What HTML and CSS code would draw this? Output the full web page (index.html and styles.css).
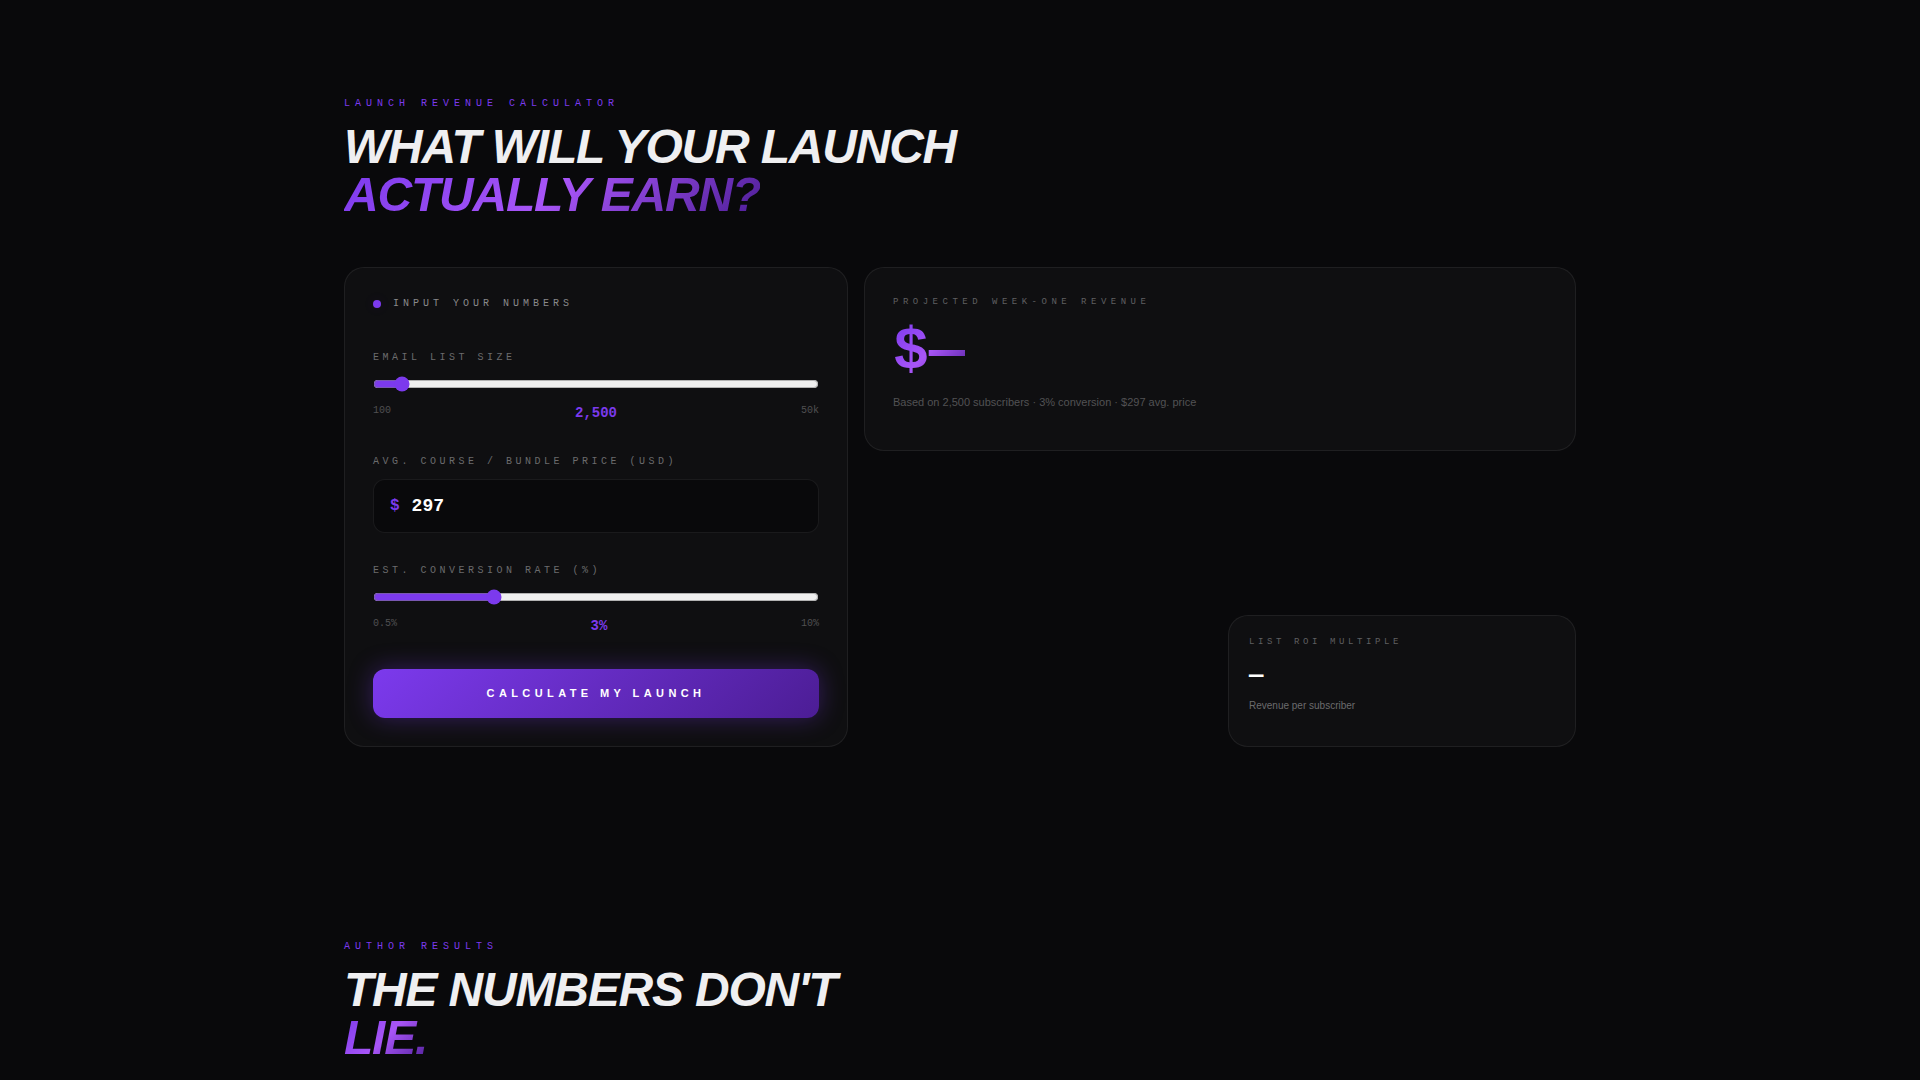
FILE: index.html
```
<!DOCTYPE html>
<html lang="en">
  <head>
    <meta charset="UTF-8" />
    <meta name="viewport" content="width=device-width, initial-scale=1.0" />
    <title>Launch Revenue Calculator</title>
    <link rel="stylesheet" href="styles.css">
  </head>
  <body>
    <section class="section">
      <p class="eyebrow">LAUNCH REVENUE CALCULATOR</p>
      <h2 class="heading">
        WHAT WILL YOUR LAUNCH<br />
        <span class="gradient-text">ACTUALLY EARN?</span>
      </h2>

      <div class="calculator">
        <form class="card inputs" id="launchForm">
          <div class="inputs-title"><span class="dot"></span>INPUT YOUR NUMBERS</div>

          <div class="field">
            <label for="listSize">EMAIL LIST SIZE</label>
            <input type="range" id="listSize" min="100" max="50000" step="100" value="2500" />
            <div class="scale">
              <span>100</span>
              <output id="listSizeValue" for="listSize">2,500</output>
              <span>50k</span>
            </div>
          </div>

          <div class="field">
            <label for="price">AVG. COURSE / BUNDLE PRICE (USD)</label>
            <div class="price-box">
              <span class="currency">$</span>
              <input type="number" id="price" value="297" min="1" />
            </div>
          </div>

          <div class="field">
            <label for="rate">EST. CONVERSION RATE (%)</label>
            <input type="range" id="rate" min="0.5" max="10" step="0.5" value="3" />
            <div class="scale">
              <span>0.5%</span>
              <output id="rateValue" for="rate">3%</output>
              <span>10%</span>
            </div>
          </div>

          <button type="button" class="calculate" onclick="calculate()">CALCULATE MY LAUNCH</button>
        </form>

        <div class="results">
          <div class="card revenue">
            <p class="result-label">PROJECTED WEEK-ONE REVENUE</p>
            <p class="revenue-amount gradient-text" id="revenue">$—</p>
            <p class="revenue-note" id="summary">Based on 2,500 subscribers · 3% conversion · $297 avg. price</p>
          </div>
          <div class="card roi">
            <p class="result-label roi-label">LIST ROI MULTIPLE</p>
            <p class="roi-amount" id="roi">—</p>
            <p class="roi-note">Revenue per subscriber</p>
          </div>
        </div>
      </div>
    </section>

    <section class="section">
      <p class="eyebrow">AUTHOR RESULTS</p>
      <h2 class="heading">
        THE NUMBERS DON'T<br />
        <span class="gradient-text">LIE.</span>
      </h2>
    </section>

    <script>
      const listSize = document.getElementById("listSize");
      const price = document.getElementById("price");
      const rate = document.getElementById("rate");

      function updateLabels() {
        const size = Number(listSize.value).toLocaleString("en-US");
        document.getElementById("listSizeValue").textContent = size;
        document.getElementById("rateValue").textContent = `${rate.value}%`;
        document.getElementById("summary").textContent =
          `Based on ${size} subscribers · ${rate.value}% conversion · $${price.value} avg. price`;
      }

      function calculate() {
        // Revenue = subscribers * conversion * price
        const revenue = (listSize.value * rate.value * price.value) / 100;
        document.getElementById("revenue").textContent =
          `$${Math.round(revenue).toLocaleString("en-US")}`;
        document.getElementById("roi").textContent =
          `$${(revenue / listSize.value).toFixed(2)}`;
      }

      document.getElementById("launchForm").addEventListener("input", updateLabels);
    </script>
  </body>
</html>
```
FILE: styles.css
```
* {
  box-sizing: border-box;
}
body {
  margin: 0;
  background-color: #09090b;
  color: #efeff1;
  font-family: "Liberation Sans", Arial, sans-serif;
  line-height: 1.5;
}
p,
h2 {
  margin: 0;
}
.section {
  max-width: 1280px;
  margin: 0 auto;
  padding: 96px 24px;
}
.eyebrow {
  margin-bottom: 12px;
  color: #7c3aed;
  font-family: "Liberation Mono", "Courier New", monospace;
  font-size: 10px;
  letter-spacing: 5px;
}
.heading {
  margin-bottom: 48px;
  font-size: 48px;
  font-style: italic;
  font-weight: 900;
  line-height: 48px;
  letter-spacing: -0.025em;
}
.gradient-text {
  background: linear-gradient(135deg, #7c3aed 0%, #a855f7 50%, #4c1d95 100%);
  -webkit-background-clip: text;
  background-clip: text;
  color: transparent;
}

/* Calculator */
.calculator {
  display: grid;
  grid-template-columns: repeat(12, 1fr);
  gap: 16px;
}
.card {
  padding: 28px;
  background-color: #0f0f11;
  border: 1px solid rgba(255, 255, 255, 0.07);
  border-radius: 20px;
}
.inputs {
  grid-column: span 5;
}
.inputs-title {
  display: flex;
  align-items: center;
  gap: 12px;
  margin-bottom: 39px;
  color: #8a8a8c;
  font-family: "Liberation Mono", "Courier New", monospace;
  font-size: 10px;
  letter-spacing: 4px;
}
.dot {
  width: 8px;
  height: 8px;
  border-radius: 50%;
  background-color: #7c3aed;
  box-shadow: 0 0 12px rgba(124, 58, 237, 0.1);
}
.field {
  margin-bottom: 30px;
}
.field label {
  display: block;
  margin-bottom: 10px;
  color: #6b6b6d;
  font-family: "Liberation Mono", "Courier New", monospace;
  font-size: 10px;
  letter-spacing: 0.35em;
}
input[type="range"] {
  display: block;
  width: 100%;
  height: 18px;
  margin: 0;
  accent-color: #7c3aed;
}
.scale {
  display: flex;
  justify-content: space-between;
  align-items: flex-start;
  margin-top: 10px;
  color: #4f4f51;
  font-family: "Liberation Mono", "Courier New", monospace;
  font-size: 10px;
}
.scale output {
  color: #7c3aed;
  font-size: 14px;
  font-weight: bold;
}
.price-box {
  display: flex;
  align-items: center;
  gap: 12px;
  padding: 12px 16px;
  background-color: #09090b;
  border: 1px solid rgba(255, 255, 255, 0.07);
  border-radius: 12px;
  font-family: "Liberation Mono", "Courier New", monospace;
  font-weight: bold;
}
.currency {
  color: #7c3aed;
  font-size: 16px;
}
.price-box input {
  flex: 1;
  min-width: 0;
  height: 28px;
  padding: 0;
  background: none;
  border: 0;
  outline: 0;
  color: #fff;
  font: inherit;
  font-size: 18px;
  appearance: textfield;
}
.calculate {
  display: block;
  width: 100%;
  margin-top: 32px;
  padding: 16px;
  background: linear-gradient(135deg, #7c3aed, #4c1d95);
  border: 0;
  border-radius: 12px;
  box-shadow: 0 0 24px rgba(124, 58, 237, 0.35);
  color: #fff;
  font-family: inherit;
  font-size: 11px;
  font-weight: 900;
  line-height: 17px;
  letter-spacing: 0.4em;
  cursor: pointer;
}

/* Results */
.results {
  grid-column: span 7;
  display: grid;
  grid-template-columns: 1fr 1fr;
  grid-template-rows: auto 1fr 1fr;
  gap: 16px;
}
.revenue {
  grid-column: span 2;
  padding-bottom: 40px;
}
.result-label {
  color: #5f5f61;
  font-family: "Liberation Mono", "Courier New", monospace;
  font-size: 9px;
  letter-spacing: 0.5em;
}
.revenue-amount {
  width: fit-content;
  margin-top: 12px;
  font-family: "Liberation Mono", "Courier New", monospace;
  font-size: 60px;
  font-weight: 900;
  line-height: 60px;
}
.revenue-note {
  margin-top: 12px;
  color: #525254;
  font-size: 11px;
}
.roi {
  grid-column: 2;
  grid-row: 3;
  padding: 20px;
}
.roi-label {
  letter-spacing: 0.4em;
}
.roi-amount {
  margin-top: 8px;
  color: #fff;
  font-family: "Liberation Mono", "Courier New", monospace;
  font-size: 24px;
  font-weight: 900;
}
.roi-note {
  margin-top: 4px;
  color: #6b6b6d;
  font-size: 10px;
}
```
